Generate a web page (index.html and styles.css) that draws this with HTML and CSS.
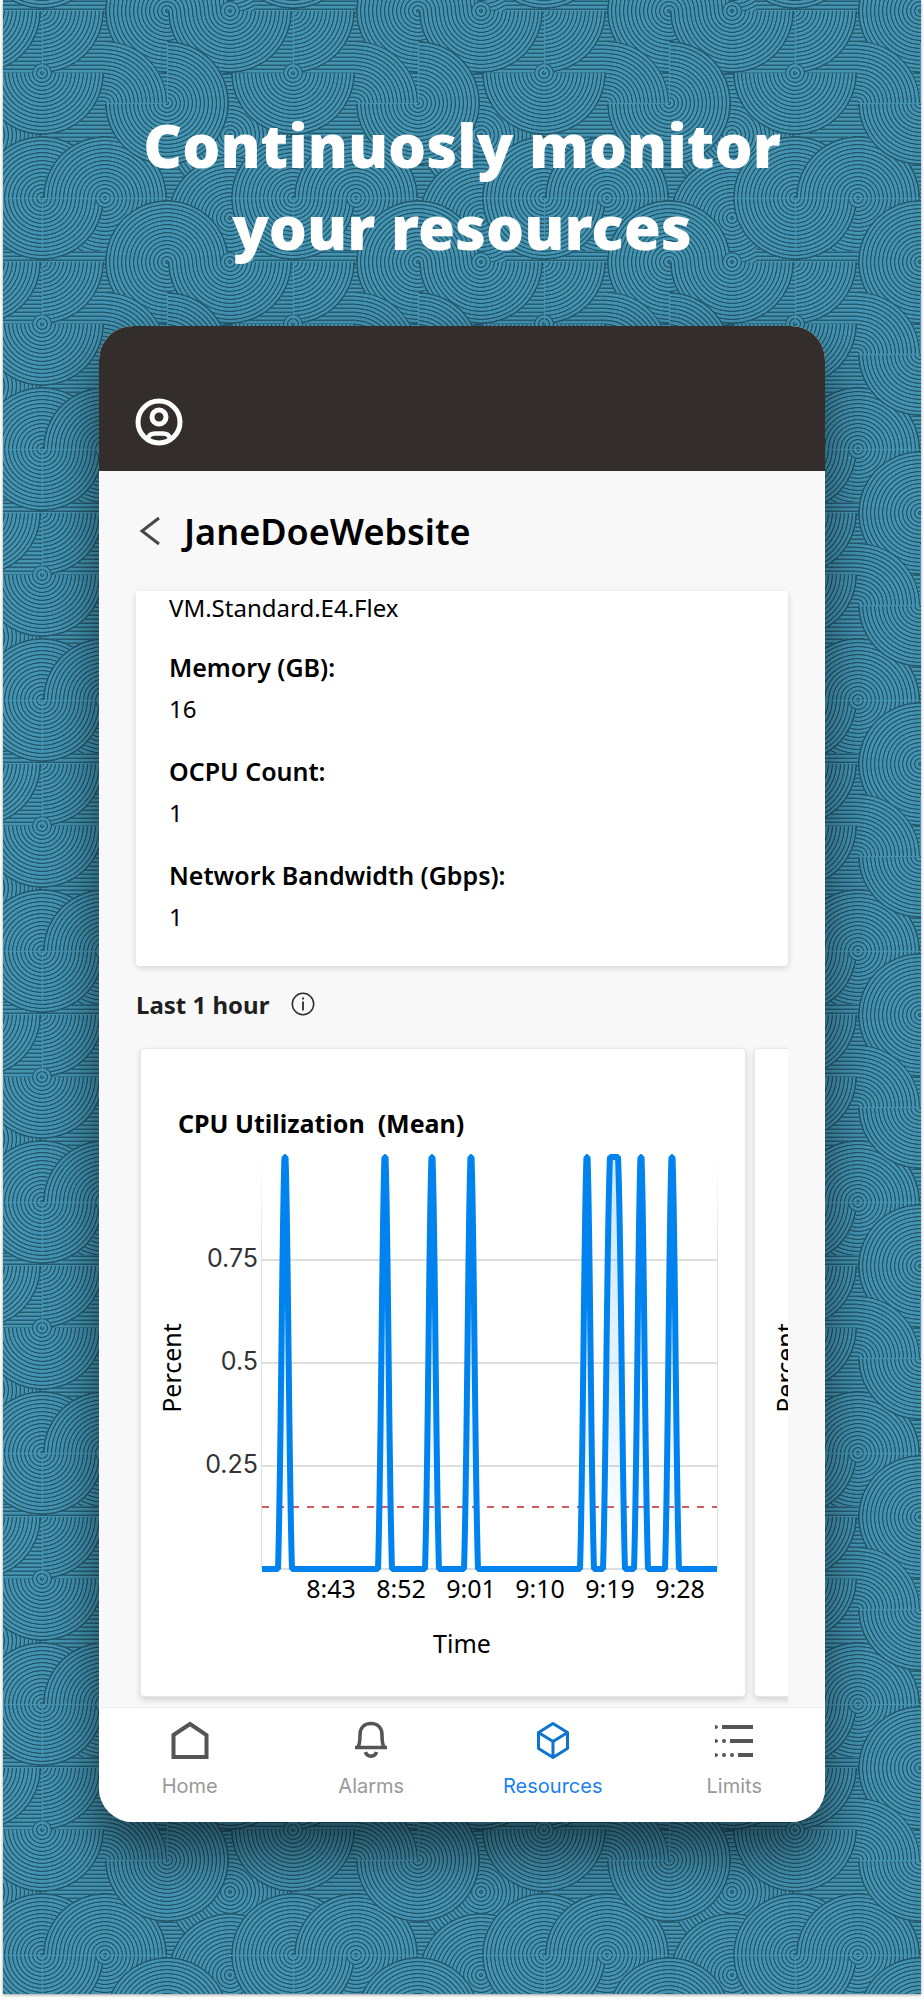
FILE: index.html
```html
<!DOCTYPE html>
<html lang="en">
<head>
    <meta charset="utf-8">
    <meta name="viewport" content="width=device-width, initial-scale=1">
    <title>Continuosly monitor your resources</title>
    <link rel="stylesheet" href="styles.css">
</head>
<body>
    <div class="page">
        <!-- Swirl wallpaper -->
        <svg class="wallpaper" aria-hidden="true">
            <defs>
                <radialGradient id="rings" gradientUnits="userSpaceOnUse" cx="0" cy="0" r="4" spreadMethod="repeat">
                    <stop offset="0" stop-color="#4393b1"/>
                    <stop offset="0.1" stop-color="#4393b1"/>
                    <stop offset="0.25" stop-color="#22566a"/>
                    <stop offset="0.4" stop-color="#22566a"/>
                    <stop offset="0.55" stop-color="#4393b1"/>
                    <stop offset="1" stop-color="#4393b1"/>
                </radialGradient>
                <linearGradient id="rows" gradientUnits="userSpaceOnUse" x1="0" y1="0" x2="0" y2="4" spreadMethod="repeat">
                    <stop offset="0" stop-color="#4393b1"/>
                    <stop offset="0.25" stop-color="#265c70"/>
                    <stop offset="0.4" stop-color="#265c70"/>
                    <stop offset="0.55" stop-color="#4393b1"/>
                    <stop offset="1" stop-color="#4393b1"/>
                </linearGradient>
                <g id="disc"><circle r="62"/><circle class="rim" r="61"/></g>
                <g id="eye"><circle r="10"/></g>
                <g id="lower"><path d="M-62 0A62 62 0 0 0 62 0Z"/><path class="rim" d="M-61 0A61 61 0 0 0 61 0"/></g>
                <g id="upper"><path d="M-62 0A62 62 0 0 1 62 0Z"/><path class="rim" d="M-61 0A61 61 0 0 1 61 0"/></g>
                <g id="quarter-ne"><path d="M0 0V-62A62 62 0 0 1 62 0Z"/></g>
                <g id="quarter-se"><path d="M0 0H62A62 62 0 0 1 0 62Z"/><path class="rim" d="M61 0A61 61 0 0 1 0 61"/></g>
                <g id="right"><path d="M0 -62A62 62 0 0 1 0 62Z"/><path class="rim" d="M0 -61A61 61 0 0 1 0 61"/></g>
                <pattern id="swirls" patternUnits="userSpaceOnUse" x="0" y="0" width="251" height="251">
                    <rect class="rows" width="251" height="251"/>
                    <g class="swirl" transform="translate(-3 0)">
                        <use href="#disc" x="230" y="135"/>
                        <use href="#disc" x="-21" y="135"/>
                        <use href="#disc" x="230" y="218"/>
                        <use href="#disc" x="105" y="198"/>
                        <use href="#disc" x="230" y="-33"/>
                        <use href="#disc" x="42" y="198"/>
                        <use href="#disc" x="293" y="198"/>
                        <use href="#upper" x="105" y="198"/>
                        <use href="#quarter-se" x="42" y="198"/>
                        <use href="#disc" x="42" y="-53"/>
                        <use href="#disc" x="293" y="-53"/>
                        <use href="#disc" x="167" y="11"/>
                        <use href="#disc" x="167" y="262"/>
                        <use href="#quarter-se" x="42" y="11"/>
                        <use href="#quarter-se" x="42" y="262"/>
                        <use href="#quarter-se" x="293" y="11"/>
                        <use href="#lower" x="230" y="11"/>
                        <use href="#lower" x="-21" y="11"/>
                        <use href="#quarter-ne" x="105" y="103"/>
                        <use href="#lower" x="167" y="103"/>
                        <use href="#right" x="167" y="103"/>
                        <use href="#lower" x="42" y="73"/>
                        <use href="#lower" x="293" y="73"/>
                        <use href="#eye" x="42" y="73"/>
                        <use href="#eye" x="230" y="11"/>
                        <use href="#eye" x="105" y="198"/>
                        <path class="seam" d="M0 198.500H167M231 198.500H254M42.500 198V251M42.500 11V73M167.500 42V103M105 103.500H167"/>
                    </g>
                </pattern>
            </defs>
            <rect width="100%" height="100%" fill="url(#swirls)"/>
        </svg>

        <h1 class="headline">Continuosly monitor<br>your resources</h1>

        <main class="phone">
            <header class="topbar">
                <button class="icon-button" type="button" aria-label="Profile">
                    <svg width="48" height="48" viewBox="0 0 48 48" fill="none" stroke="#fff" stroke-width="5">
                        <circle cx="24" cy="24" r="21"/>
                        <circle cx="24" cy="19" r="7"/>
                        <path d="M13 40C14 37 17 35.500 20 35.500H28C31 35.500 34 37 35 40" stroke-width="4.500"/>
                    </svg>
                </button>
            </header>

            <div class="content">
                <div class="title-row">
                    <button class="icon-button" type="button" aria-label="Back">
                        <svg width="28" height="32" viewBox="0 0 28 32" fill="none" stroke="#484848" stroke-width="3">
                            <path d="M23 3L6 16L23 29"/>
                        </svg>
                    </button>
                    <h2>JaneDoeWebsite</h2>
                </div>

                <dl class="details">
                    <dd>VM.Standard.E4.Flex</dd>
                    <dt>Memory (GB):</dt>
                    <dd>16</dd>
                    <dt>OCPU Count:</dt>
                    <dd>1</dd>
                    <dt>Network Bandwidth (Gbps):</dt>
                    <dd>1</dd>
                </dl>

                <div class="period">
                    <span>Last 1 hour</span>
                    <button class="icon-button" type="button" aria-label="Information">
                        <svg width="24" height="24" viewBox="0 0 24 24" fill="none" stroke="#2b2b2b" stroke-width="1.500">
                            <circle cx="12" cy="12" r="10.700"/>
                            <path d="M12 9.500V18.500M12 5.500V7.500" stroke-width="1.800"/>
                        </svg>
                    </button>
                </div>

                <div class="charts">
                    <section class="chart-card">
                        <h3>CPU Utilization&nbsp; (Mean)</h3>
                        <svg class="chart" viewBox="-121 -16 604 555" role="img" aria-label="CPU utilization">
                            <defs>
                                <linearGradient id="area" x1="0" y1="0" x2="0" y2="1">
                                    <stop offset="0" stop-color="#0083ee" stop-opacity="0.2"/>
                                    <stop offset="1" stop-color="#0083ee" stop-opacity="0"/>
                                </linearGradient>
                                <linearGradient id="edge" gradientUnits="userSpaceOnUse" x1="0" y1="0" x2="0" y2="103">
                                    <stop offset="0" stop-color="#dedede" stop-opacity="0"/>
                                    <stop offset="1" stop-color="#dedede"/>
                                </linearGradient>
                            </defs>
                            <path class="grid" d="M0 103H455M0 206H455M0 309H455M0 412H455"/>
                            <path class="edge" d="M-1 0H0V412H-1ZM455 0H456V412H455Z"/>
                            <path class="limit" d="M0 350H455"/>
                            <path class="usage" d="M0 412H16C19 320 20 60 22.500 0H23.500C26 60 27 320 30 412
                                H116C119 320 120 60 122.500 0H123.500C126 60 127 320 130 412
                                H163C166 320 167 60 169.500 0H170.500C173 60 174 320 177 412
                                H202C205 320 206 60 208.500 0H209.500C212 60 213 320 216 412
                                H318C321 320 322 60 324.500 0H325.500C328 60 329 320 332 412
                                H341C344 320 345 60 348 0H356C359 60 360 320 363 412
                                H372C375 320 376 60 378.500 0H379.500C382 60 383 320 386 412
                                H403C406 320 407 60 409.500 0H410.500C413 60 414 320 417 412H455"/>
                            <g class="y-labels">
                                <text x="-4" y="110">0.75</text>
                                <text x="-4" y="213">0.5</text>
                                <text x="-4" y="316">0.25</text>
                            </g>
                            <g class="x-labels">
                                <text x="69" y="441">8:43</text>
                                <text x="139" y="441">8:52</text>
                                <text x="209" y="441">9:01</text>
                                <text x="278" y="441">9:10</text>
                                <text x="348" y="441">9:19</text>
                                <text x="418" y="441">9:28</text>
                                <text x="200" y="496">Time</text>
                                <text transform="translate(-81 211) rotate(-90)">Percent</text>
                            </g>
                        </svg>
                    </section>
                    <section class="chart-card">
                        <h3>&nbsp;</h3>
                        <svg class="chart" viewBox="-121 -16 604 555">
                            <g class="x-labels">
                                <text transform="translate(-81 211) rotate(-90)">Percent</text>
                            </g>
                        </svg>
                    </section>
                </div>
            </div>

            <nav class="tabs">
                <a href="#home">
                    <svg width="40" height="40" viewBox="0 0 40 40" fill="none" stroke="#555" stroke-width="4">
                        <path d="M3.500 15L20 4L36.500 15V37H3.500Z"/>
                    </svg>
                    Home
                </a>
                <a href="#alarms">
                    <svg width="40" height="40" viewBox="0 0 40 40" fill="none" stroke="#555" stroke-width="3.600">
                        <path d="M4 27.500H36M7 27C9 24 9 20 9 15C9 8 13 3.500 20 3.500S31 8 31 15C31 20 31 24 33 27"/>
                        <path d="M14.500 32C16 37.500 24 37.500 25.500 32"/>
                    </svg>
                    Alarms
                </a>
                <a class="active" href="#resources">
                    <svg width="40" height="40" viewBox="0 0 40 40" fill="none" stroke="#0f73d0" stroke-width="3" stroke-linejoin="round">
                        <path d="M20 3.500L34.500 12.500V28.500L20 37.500L5.500 28.500V12.500ZM5.500 12.500L20 21.500L34.500 12.500M20 21.500V37.500"/>
                    </svg>
                    Resources
                </a>
                <a href="#limits">
                    <svg width="40" height="40" viewBox="0 0 40 40" fill="#555">
                        <path d="M8 5H39V9H8ZM16 19H39V23H16ZM24 33H39V37H24Z"/>
                        <path d="M1 5C5 5 5 9 1 9ZM1 19C5 19 5 23 1 23ZM1 33C5 33 5 37 1 37Z"/>
                        <circle cx="10" cy="21" r="2"/>
                        <circle cx="10" cy="35" r="2"/>
                        <circle cx="18" cy="35" r="2"/>
                    </svg>
                    Limits
                </a>
            </nav>
        </main>
    </div>
</body>
</html>
```
FILE: styles.css
```css
* {
    box-sizing: border-box;
}
body {
    margin: 0;
    padding: 0 3px 6px;
    background-color: #fff;
    color: #000;
    font-family: "Noto Sans", "Open Sans", sans-serif;
}
h1, h2, h3, dl, dd {
    margin: 0;
}
.page {
    position: relative;
    padding: 104px 96px 172px;
    background-color: #4393b1;
    box-shadow: 0 1px 3px rgba(0, 0, 0, 0.4);
}
/* sits behind everything else on the page */
.wallpaper {
    position: absolute;
    top: 0;
    left: 0;
    width: 100%;
    height: 100%;
}
.rows {
    fill: url(#rows);
}
.swirl {
    fill: url(#rings);
}
.rim {
    fill: none;
    stroke: #22566a;
    stroke-width: 1;
}
.seam {
    stroke: #4393b1;
    stroke-width: 1;
}
.headline {
    position: relative;
    margin-bottom: 58px;
    color: #fff;
    font-size: 60px;
    font-weight: 900;
    line-height: 82px;
    text-align: center;
}
.phone {
    position: relative;
    overflow: hidden;
    border-radius: 34px;
    background-color: #f8f8f8;
    box-shadow: 0 30px 50px rgba(0, 0, 0, 0.5);
}
.icon-button {
    display: flex;
    padding: 0;
    border: none;
    background: none;
    cursor: pointer;
}
.topbar {
    padding: 72px 36px 25px;
    background-color: #332e2b;
}
.content {
    padding: 0 37px;
}
.title-row {
    display: flex;
    align-items: center;
    gap: 20px;
    height: 120px;
}
.title-row h2 {
    font-size: 36px;
    font-weight: 600;
}
.details {
    padding: 0 33px 8px;
    border-radius: 0 0 4px 4px;
    background-color: #fff;
    box-shadow: 0 2px 6px rgba(0, 0, 0, 0.15);
    font-size: 25px;
    line-height: 40px;
}
.details dt {
    font-weight: 600;
    line-height: 43px;
}
.details dd {
    margin-bottom: 21px;
    font-size: 24px;
}
.details dd:first-child {
    line-height: 34px;
}
.period {
    display: flex;
    align-items: center;
    gap: 22px;
    height: 76px;
    color: #1f1f1f;
    font-size: 24px;
    font-weight: 700;
}
.charts {
    display: flex;
    gap: 8px;
    overflow: hidden;
    padding: 6px 0 10px 4px;
}
.chart-card {
    flex: 0 0 606px;
    padding-top: 58px;
    border: 1px solid #e6e6e6;
    border-radius: 4px;
    background-color: #fff;
    box-shadow: 0 3px 6px rgba(0, 0, 0, 0.15);
}
.chart-card h3 {
    margin-bottom: 2px;
    padding-left: 37px;
    font-size: 25px;
    font-weight: 700;
    line-height: 32px;
}
.chart {
    display: block;
    width: 100%;
}
.grid {
    stroke: #dedede;
    stroke-width: 2;
}
.edge {
    fill: url(#edge);
}
.limit {
    stroke: #d65a5c;
    stroke-width: 2;
    stroke-dasharray: 7 8;
}
.usage {
    fill: url(#area);
    stroke: #0083ee;
    stroke-width: 6;
    stroke-linejoin: bevel;
}
.y-labels {
    fill: #333;
    font-family: Inter, sans-serif;
    font-size: 25px;
    text-anchor: end;
}
.x-labels {
    font-size: 25px;
    text-anchor: middle;
}
.tabs {
    display: grid;
    grid-template-columns: repeat(4, 1fr);
    height: 115px;
    padding-top: 12px;
    border-top: 1px solid #eee;
    background-color: #fff;
}
.tabs a {
    display: flex;
    flex-direction: column;
    align-items: center;
    gap: 12px;
    color: #999;
    font-family: Inter, sans-serif;
    font-size: 20px;
    line-height: 28px;
    text-decoration: none;
}
.tabs .active {
    color: #1a80f0;
}
```
